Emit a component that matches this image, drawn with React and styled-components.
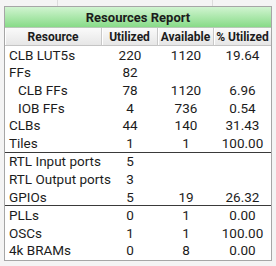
import styled, { createGlobalStyle } from "styled-components";

const GlobalStyle = createGlobalStyle`
  html, body {
    margin: 0;
    padding: 0;
    background: #f4f4f4;
  }
  body {
    font-family: Roboto, "Liberation Sans", sans-serif;
    color: #1c1c1c;
  }
`;

const Page = styled.div`
  width: 276px;
  height: 266px;
  overflow: hidden;
  padding-left: 4px;
  box-sizing: border-box;
`;

// remnant of the panel above, cut off by the window
const TopStrip = styled.div`
  display: grid;
  grid-template-columns: 54px 155px 1fr;
  height: 6px;
  width: 268px;
`;

const StripCell = styled.div`
  border-right: ${(p) => (p.$last ? "none" : "1px solid #dcdcdc")};
`;

const Frame = styled.div`
  width: 268px;
  border: 1px solid #a6a6a6;
  box-sizing: border-box;
  background: #ffffff;
  padding-bottom: 1px;
`;

const Title = styled.div`
  height: 20px;
  display: flex;
  align-items: center;
  justify-content: center;
  background: linear-gradient(#d0f4d0, #88db88);
  border-bottom: 1px solid #b9c9b9;
  font-weight: 700;
  font-size: 13px;
`;

const Grid = styled.div`
  display: grid;
  grid-template-columns: 97px 56px 56px 57px;
`;

const HeadCell = styled.div`
  height: 17px;
  display: flex;
  align-items: center;
  justify-content: center;
  font-weight: 700;
  font-size: 12px;
  background: linear-gradient(#fafafa, #e6e6e6);
  border-bottom: 1px solid #c4c4c4;
  border-right: ${(p) => (p.$last ? "none" : "1px solid #c8c8c8")};
  box-shadow: inset 1px 0 0 #ffffff;
  white-space: nowrap;
`;

const Cell = styled.div`
  height: 17.6px;
  display: flex;
  align-items: center;
  font-size: 13.5px;
  justify-content: ${(p) => (p.$name ? "flex-start" : "center")};
  padding-left: ${(p) => (p.$name ? (p.$sub ? "13px" : "4px") : "0")};
  border-top: ${(p) => (p.$divider ? "1px solid #3a3a3a" : "none")};
  white-space: nowrap;
`;

const rows = [
  { name: "CLB LUT5s", used: "220", avail: "1120", pct: "19.64" },
  { name: "FFs", used: "82" },
  { name: "CLB FFs", used: "78", avail: "1120", pct: "6.96", sub: true },
  { name: "IOB FFs", used: "4", avail: "736", pct: "0.54", sub: true },
  { name: "CLBs", used: "44", avail: "140", pct: "31.43" },
  { name: "Tiles", used: "1", avail: "1", pct: "100.00" },
  { name: "RTL Input ports", used: "5", divider: true },
  { name: "RTL Output ports", used: "3" },
  { name: "GPIOs", used: "5", avail: "19", pct: "26.32" },
  { name: "PLLs", used: "0", avail: "1", pct: "0.00", divider: true },
  { name: "OSCs", used: "1", avail: "1", pct: "100.00" },
  { name: "4k BRAMs", used: "0", avail: "8", pct: "0.00" },
];

const App = () => {
  return (
    <>
      <GlobalStyle />
      <Page>
        <TopStrip>
          <StripCell />
          <StripCell />
          <StripCell $last />
        </TopStrip>
        <Frame>
          <Title>Resources Report</Title>
          <Grid>
            <HeadCell>Resource</HeadCell>
            <HeadCell>Utilized</HeadCell>
            <HeadCell>Available</HeadCell>
            <HeadCell $last>% Utilized</HeadCell>
            {rows.map((r) => (
              <>
                <Cell key={r.name + "n"} $name $sub={r.sub} $divider={r.divider}>
                  {r.name}
                </Cell>
                <Cell key={r.name + "u"} $divider={r.divider}>{r.used}</Cell>
                <Cell key={r.name + "a"} $divider={r.divider}>{r.avail || ""}</Cell>
                <Cell key={r.name + "p"} $divider={r.divider}>{r.pct || ""}</Cell>
              </>
            ))}
          </Grid>
        </Frame>
      </Page>
    </>
  );
};

export default App;
